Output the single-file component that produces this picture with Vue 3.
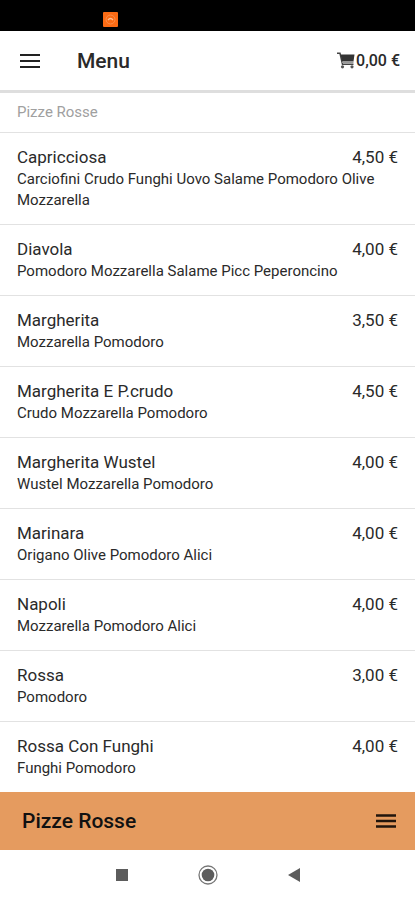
<template>
  <div class="app">
    <div class="status-bar">
      <svg class="status-icon" viewBox="0 0 15 15">
        <rect width="15" height="15" rx="1" fill="#fb6b14" />
        <circle cx="7.5" cy="7.5" r="4.5" fill="none" stroke="#fd8f4c" stroke-width="1" />
        <path d="M5 8q2.500-3 5 0" fill="none" stroke="#ffc296" stroke-width="1.3" />
      </svg>
    </div>

    <header class="toolbar">
      <button class="icon-button" aria-label="Apri menu">
        <svg class="bars" viewBox="0 0 20 14">
          <path d="M0 1h20M0 7h20M0 13h20" stroke="#222" stroke-width="2" />
        </svg>
      </button>
      <h1>Menu</h1>
      <button class="cart" aria-label="Carrello 0,00 €">
        <svg class="cart-icon" viewBox="0 0 18 17">
          <path d="M0 1.3h3l2.500 11h11" fill="none" stroke="#444" stroke-width="1.5" />
          <path d="M3.500 2.500h14l-1 7H5z" fill="#333" />
          <path d="M5 10.300h11.500" stroke="#999" stroke-width="1.500" />
          <circle cx="5.500" cy="14.800" r="1.600" fill="#555" />
          <circle cx="15" cy="14.800" r="1.600" fill="#555" />
        </svg>
        <span>0,00 €</span>
      </button>
    </header>

    <main>
      <h2 class="list-header">Pizze Rosse</h2>
      <ul class="list">
        <li v-for="pizza in pizze" :key="pizza.nome" class="item">
          <div class="item-row">
            <h3>{{ pizza.nome }}</h3>
            <span>{{ pizza.prezzo }} €</span>
          </div>
          <p>{{ pizza.ingredienti }}</p>
        </li>
      </ul>
    </main>

    <footer class="category-bar">
      <span>Pizze Rosse</span>
      <button class="icon-button" aria-label="Categorie">
        <svg class="bars" viewBox="0 0 20 14">
          <path d="M0 1.500h20M0 7h20M0 12.500h20" stroke="#21150c" stroke-width="2.600" />
        </svg>
      </button>
    </footer>

    <nav class="system-nav">
      <button class="icon-button" aria-label="Recenti">
        <svg viewBox="0 0 20 20"><rect x="4" y="4" width="12" height="12" fill="#5c5c5c" /></svg>
      </button>
      <button class="icon-button" aria-label="Home">
        <svg viewBox="0 0 20 20">
          <circle cx="10" cy="10" r="9" fill="none" stroke="#777" stroke-width="1.300" />
          <circle cx="10" cy="10" r="6.300" fill="#5c5c5c" />
        </svg>
      </button>
      <button class="icon-button" aria-label="Indietro">
        <svg viewBox="0 0 20 20"><path d="M4 10l12-7v14z" fill="#5c5c5c" /></svg>
      </button>
    </nav>
  </div>
</template>

<script setup>
import { ref } from 'vue';

const pizze = ref([
  { nome: 'Capricciosa', prezzo: '4,50', ingredienti: 'Carciofini Crudo Funghi Uovo Salame Pomodoro Olive Mozzarella' },
  { nome: 'Diavola', prezzo: '4,00', ingredienti: 'Pomodoro Mozzarella Salame Picc Peperoncino' },
  { nome: 'Margherita', prezzo: '3,50', ingredienti: 'Mozzarella Pomodoro' },
  { nome: 'Margherita E P.crudo', prezzo: '4,50', ingredienti: 'Crudo Mozzarella Pomodoro' },
  { nome: 'Margherita Wustel', prezzo: '4,00', ingredienti: 'Wustel Mozzarella Pomodoro' },
  { nome: 'Marinara', prezzo: '4,00', ingredienti: 'Origano Olive Pomodoro Alici' },
  { nome: 'Napoli', prezzo: '4,00', ingredienti: 'Mozzarella Pomodoro Alici' },
  { nome: 'Rossa', prezzo: '3,00', ingredienti: 'Pomodoro' },
  { nome: 'Rossa Con Funghi', prezzo: '4,00', ingredienti: 'Funghi Pomodoro' },
]);
</script>

<style>
body {
  margin: 0;
  background: white;
}
</style>

<style scoped>
.app {
  display: flex;
  flex-direction: column;
  min-height: 100vh;
  font-family: Roboto, sans-serif;
  color: #2a2a2a;
}

h1,
h2,
h3,
p,
ul {
  margin: 0;
  padding: 0;
}

button {
  padding: 0;
  border: none;
  background: none;
  color: inherit;
  font-family: inherit;
}

.icon-button {
  display: flex;
}

.bars {
  width: 20px;
  height: 14px;
}

.status-bar {
  height: 31px;
  box-sizing: border-box;
  padding: 12px 0 0 103px;
  background: black;
}

.status-icon {
  display: block;
  width: 15px;
  height: 15px;
}

.toolbar {
  display: flex;
  align-items: center;
  height: 59px;
  padding: 0 15px 0 20px;
  border-bottom: 3px solid #dedede;
}

.toolbar h1 {
  margin-left: 37px;
  font-size: 21px;
  font-weight: 500;
  line-height: 28px;
}

.cart {
  display: flex;
  align-items: center;
  gap: 1px;
  margin-left: auto;
  font-size: 16px;
  font-weight: 500;
}

.cart-icon {
  width: 18px;
  height: 17px;
}

.list-header {
  padding: 0 17px;
  border-bottom: 1px solid #e2e2e2;
  color: #a0a0a0;
  font-size: 15px;
  font-weight: 400;
  line-height: 39px;
}

.list {
  list-style: none;
}

.item {
  padding: 12px 17px 13px;
  border-bottom: 1px solid #e2e2e2;
}

.item:last-child {
  border-bottom: none;
}

.item-row {
  display: flex;
  justify-content: space-between;
  font-size: 17px;
  line-height: 24px;
}

.item h3 {
  font-size: 17px;
  font-weight: 400;
}

.item p {
  font-size: 15px;
  line-height: 21px;
}

.category-bar {
  display: flex;
  align-items: center;
  justify-content: space-between;
  height: 58px;
  padding: 0 19px 0 22px;
  background: #e59b5f;
  color: #111;
  font-size: 21px;
  font-weight: 500;
}

.system-nav {
  display: flex;
  flex: 1;
  align-items: center;
  justify-content: center;
  gap: 66px;
}

.system-nav svg {
  width: 20px;
  height: 20px;
}
</style>
